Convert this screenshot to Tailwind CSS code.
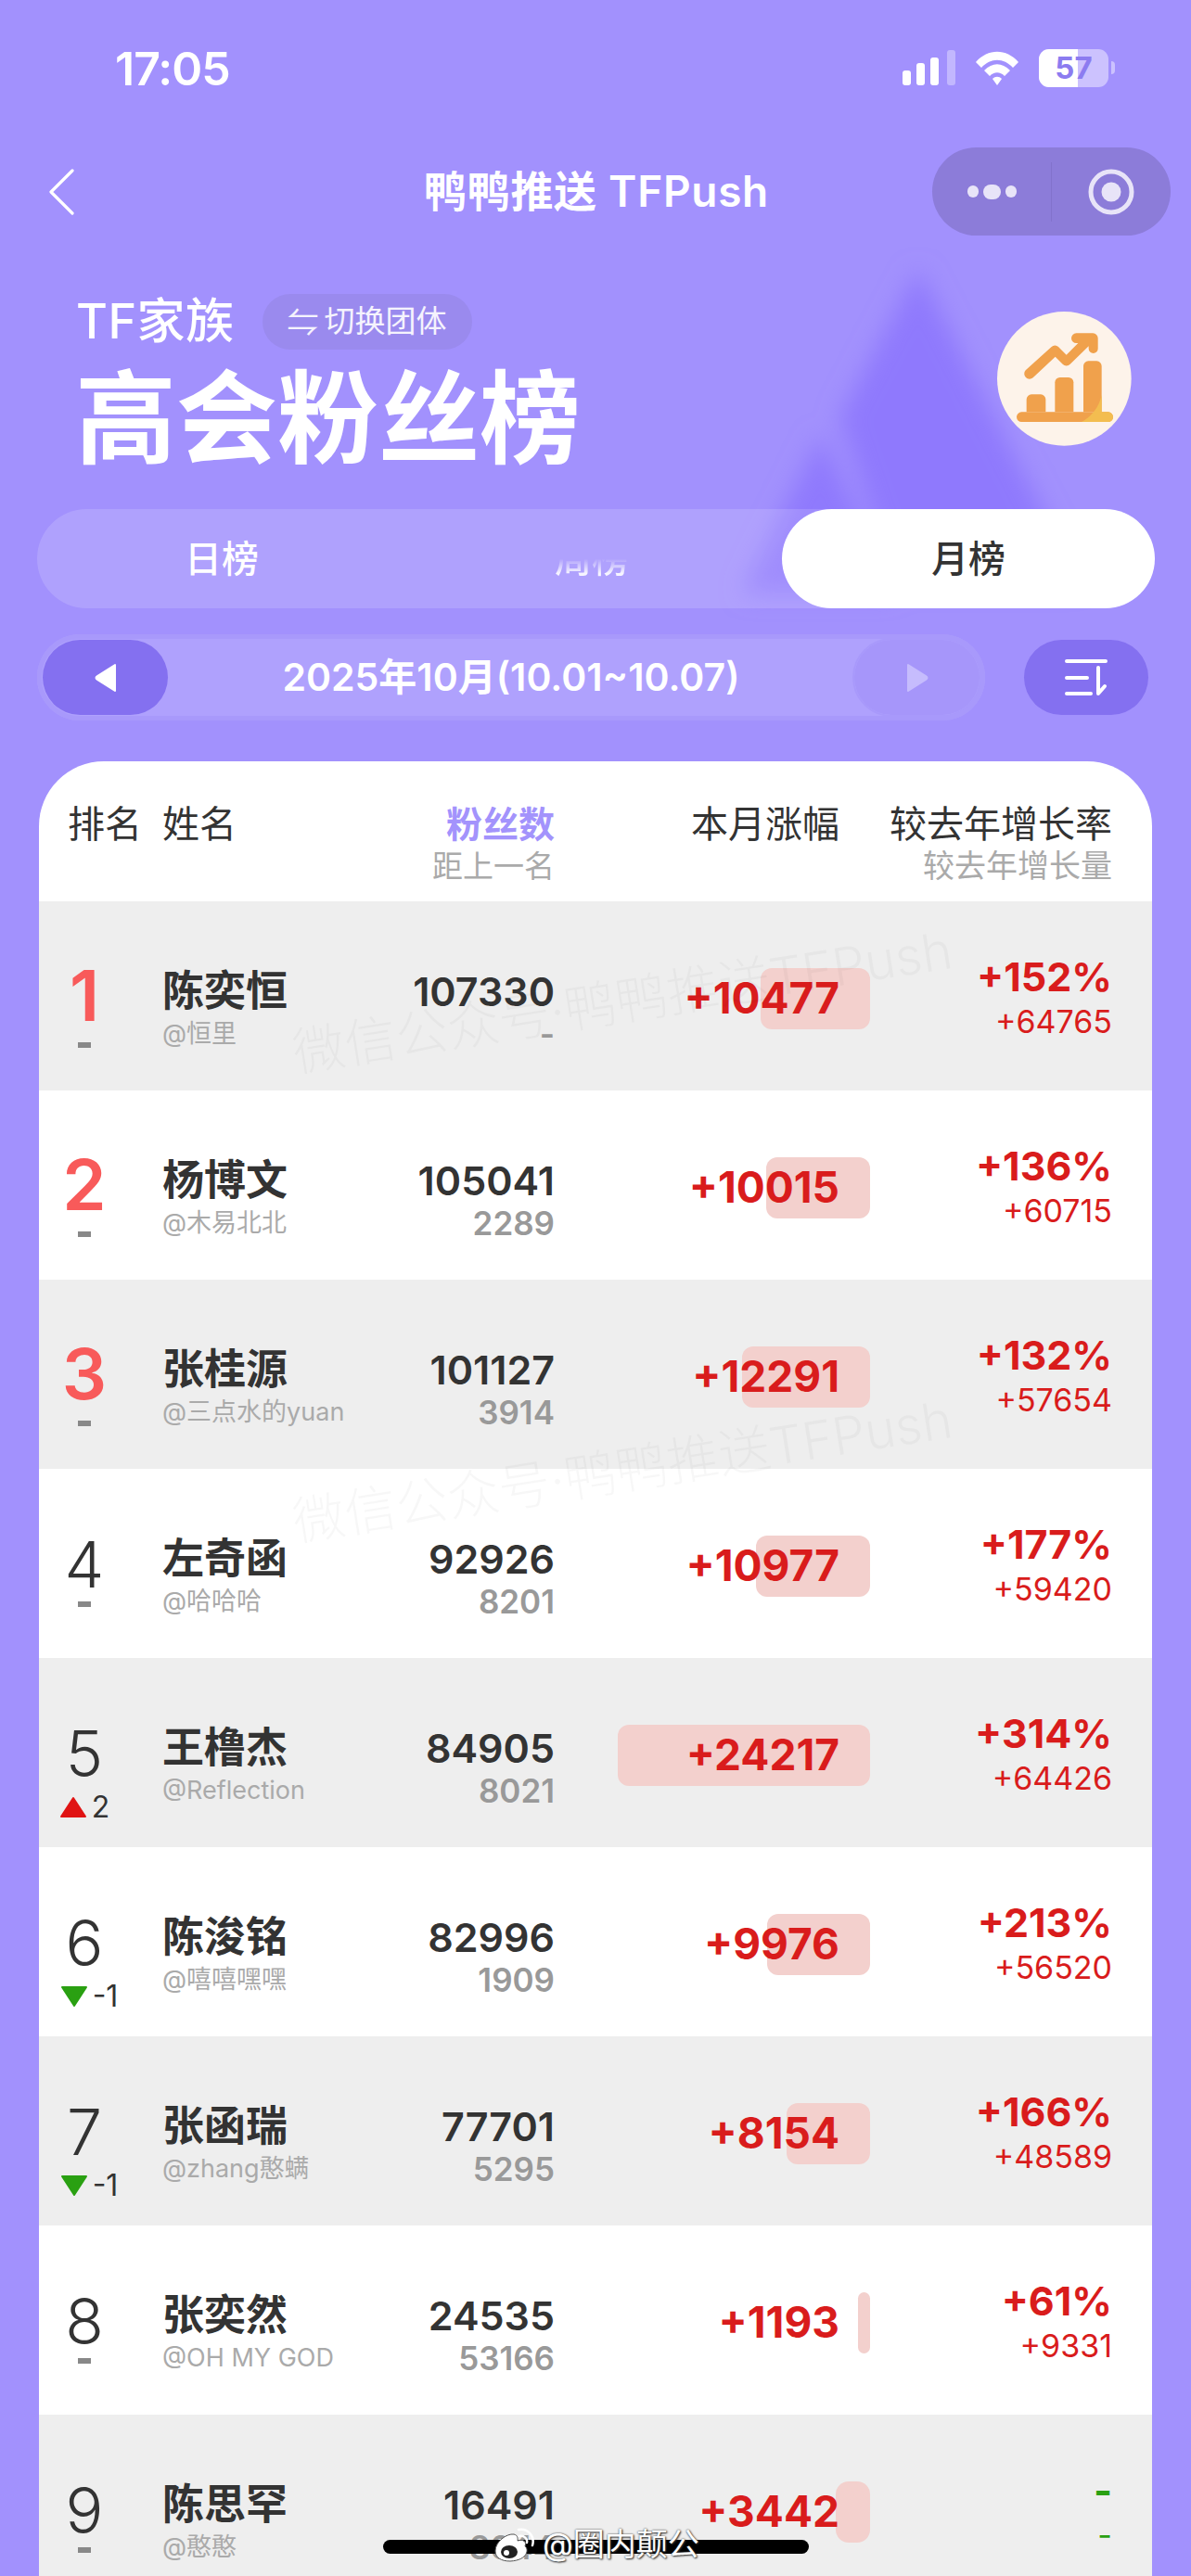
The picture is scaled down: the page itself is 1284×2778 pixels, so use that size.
<!DOCTYPE html>
<html lang="zh"><head><meta charset="utf-8"><script src="https://cdn.jsdelivr.net/npm/@tailwindcss/browser@4"></script><title>高会粉丝榜</title></head>
<body class="m-0">
<div class="relative w-[1284px] h-[2778px] overflow-hidden bg-[#a291fd] font-['Inter','Noto_Sans_CJK_SC',sans-serif] text-[#333]">
  <svg class="absolute left-0 top-0 pointer-events-none" width="1284" height="700" viewBox="0 0 1284 700"><defs><filter id="b" x="-30%" y="-30%" width="160%" height="160%"><feGaussianBlur stdDeviation="13"/></filter></defs><g filter="url(#b)" fill="#8f79fd"><path d="M990 290 L1165 630 L965 630 L905 450Z"/><path d="M885 468 L965 640 L800 640Z"/></g></svg>

  <div class="relative h-[159px]">
    <div class="flex justify-between pl-[124px] pr-[82px] pt-[45px]">
      <span class="text-[50px] leading-[58px] font-semibold text-white tracking-[-1px]">17:05</span>
      <div class="flex items-center gap-[20px] h-[52px] mt-[2px]">
        <svg width="57" height="38" viewBox="0 0 57 38"><rect x="0" y="22" width="9" height="16" rx="3" fill="#fff"/><rect x="15" y="14" width="9" height="24" rx="3" fill="#fff"/><rect x="30" y="8" width="9" height="30" rx="3" fill="#fff"/><rect x="48" y="0" width="9" height="38" rx="3" fill="#fff" fill-opacity=".35"/></svg>
        <svg width="50" height="38" viewBox="0 0 50 38"><path d="M2 13 C15 -2 35 -2 48 13 L42 19 C32 8 18 8 8 19Z" fill="#fff"/><path d="M11 22 C20 13 30 13 39 22 L33 28 C28 23 22 23 17 28Z" fill="#fff"/><path d="M20 31 C23 28 27 28 30 31 L25 38Z" fill="#fff"/></svg>
        <div class="relative flex items-center">
          <div class="relative w-[75px] h-[41px] rounded-[11px] bg-white/45 overflow-hidden"><div class="absolute left-0 top-0 bottom-0 w-[42px] bg-white"></div><span class="absolute inset-0 text-center text-[33px] leading-[41px] font-bold text-[#8c7cf0]">57</span></div>
          <div class="w-[4px] h-[14px] ml-[3px] rounded-r-full bg-white/45"></div>
        </div>
      </div>
    </div>
  </div>

  <div class="relative flex items-center h-[95px] pl-[52px] pr-[22px] justify-between">
    <svg width="28" height="50" viewBox="0 0 28 50" fill="none"><path d="M26 2 L3 25 L26 48" stroke="#fff" stroke-width="3.2" stroke-linecap="round" stroke-linejoin="round"/></svg>
    <div class="absolute left-[457px] top-0 h-[95px] flex items-center text-[46px] font-semibold text-white whitespace-nowrap tracking-[0.7px]">鸭鸭推送 TFPush</div>
    <div class="flex items-center w-[257px] h-[95px] rounded-full bg-[#8c7cd9]">
      <div class="flex items-center justify-center gap-[5px] w-[129px] h-[64px] border-r border-[#8272cc]">
        <span class="w-[12px] h-[13px] rounded-full bg-[#e8e4f8]"></span><span class="w-[19px] h-[16px] rounded-full bg-[#e8e4f8]"></span><span class="w-[12px] h-[13px] rounded-full bg-[#e8e4f8]"></span>
      </div>
      <div class="flex-1 flex justify-center">
        <svg width="52" height="52" viewBox="0 0 52 52"><circle cx="26" cy="26" r="22" fill="none" stroke="#e8e4f8" stroke-width="5"/><circle cx="26" cy="26" r="10.5" fill="#e8e4f8"/></svg>
      </div>
    </div>
  </div>

  <div class="relative flex justify-between pl-[82px] pr-[64px] pt-[63px] h-[295px]">
    <div>
      <div class="flex items-center gap-[30px] h-[60px]">
        <span class="text-[52px] leading-[60px] text-white font-medium whitespace-nowrap tracking-[0.5px]">TF家族</span>
        <div class="flex items-center gap-[6px] h-[60px] px-[27px] rounded-full bg-[#9a8aee] text-white/90 text-[33px] whitespace-nowrap"><span class="text-[34px]">⇋</span><span>切换团体</span></div>
      </div>
      <div class="ml-[-1px] mt-[16px] text-[109px] leading-[116px] font-bold text-white whitespace-nowrap">高会粉丝榜</div>
    </div>
    <svg class="mt-[19px] shrink-0" width="145" height="145" viewBox="105 80 435 435"><circle cx="322" cy="297" r="217" fill="#fdf3ea"/><g fill="#f0a14c"><path d="M200 405 V364 a16 16 0 0 1 16 -16 h30 a16 16 0 0 1 16 16 V405Z"/><path d="M292 405 V309 a16 16 0 0 1 16 -16 h28 a16 16 0 0 1 16 16 V405Z"/><path d="M384 405 V256 a16 16 0 0 1 16 -16 h27 a16 16 0 0 1 16 16 V405Z"/><rect x="168" y="405" width="312" height="32" rx="16"/><path d="M345 166 a16 16 0 0 1 16 -16 h54 a16 16 0 0 1 16 16 v34 a15 15 0 0 1 -30 0 v-8 l-60 58 a16 16 0 0 1 -24 0 l-24 -24 l-72 68 a17 17 0 0 1 -24 -24 l84 -76 a15 15 0 0 1 22 0 l26 26 l38 -38 h-6 a16 16 0 0 1 -16 -16Z"/></g><path d="M378 437 C410 420 435 390 443 350 V405 H464 a16 16 0 0 1 0 32Z" fill="#f3bd50"/></svg>
  </div>

  <div class="relative flex mx-[40px] h-[107px] rounded-full bg-white/15 text-[40px] font-medium text-white">
    <div class="w-[398px] flex items-center justify-center leading-none whitespace-nowrap">日榜</div>
    <div class="w-[400px] flex items-center justify-center leading-none whitespace-nowrap bg-clip-text text-transparent bg-linear-to-b from-transparent from-50% to-white/90 to-65%">周榜</div>
    <div class="ml-auto mr-[-1px] w-[402px] flex items-center justify-center rounded-full bg-white text-[#333]">月榜</div>
  </div>

  <div class="relative flex items-center justify-between ml-[40px] mr-[46px] mt-[28px]">
    <div class="flex items-center justify-between w-[1022px] h-[93px] p-[6px] rounded-full bg-white/15 outline-[5px] outline-offset-[-5px] outline-[#a899fb]">
      <div class="flex items-center justify-center w-[135px] h-[81px] rounded-full bg-[#8470f0]">
        <svg width="24" height="32" viewBox="0 0 24 32"><path d="M22 2 V30 L3 18 Q0 16 3 14Z" fill="#fff" stroke="#fff" stroke-width="2" stroke-linejoin="round"/></svg>
      </div>
      <span class="text-[41px] font-semibold text-white whitespace-nowrap">2025年10月(10.01~10.07)</span>
      <div class="flex items-center justify-center w-[135px] h-[81px] rounded-full bg-[#a696fa] outline-2 outline-[#a899fb]">
        <svg width="24" height="32" viewBox="0 0 24 32"><path d="M2 2 V30 L21 18 Q24 16 21 14Z" fill="#c6bcfd" stroke="#c6bcfd" stroke-width="2" stroke-linejoin="round"/></svg>
      </div>
    </div>
    <div class="flex items-center justify-center w-[134px] h-[81px] rounded-full bg-[#8470f0]">
      <svg width="46" height="42" viewBox="0 0 46 42" fill="none"><path d="M2 3 H44 M2 21 H24 M2 38 H28 M36 10 V38 L43 30" stroke="#fff" stroke-width="4" stroke-linecap="round" stroke-linejoin="round"/></svg>
    </div>
  </div>

  <div class="relative mx-[42px] mt-[44px] rounded-t-[70px] bg-white">
    <div class="flex h-[151px] text-[#333] text-[40px] leading-[46px] pt-[45px] whitespace-nowrap">
      <div class="w-[31px]"></div>
      <div class="w-[102px]">排名</div>
      <div class="w-[250px]">姓名</div>
      <div class="w-[173px] text-right"><div class="text-[39px] font-bold text-[#a393fc]">粉丝数</div><div class="text-[33px] leading-[44px] text-[#aaa]">距上一名</div></div>
      <div class="w-[307px] text-right">本月涨幅</div>
      <div class="w-[294px] text-right"><div>较去年增长率</div><div class="text-[34px] leading-[44px] text-[#aaa]">较去年增长量</div></div>
    </div>

    <!-- 1 -->
    <div class="flex h-[204px] bg-[#eeeeee] whitespace-nowrap">
      <div class="w-[98px] pt-[61px] flex flex-col items-center shrink-0"><div class="h-[80px] text-[76px] leading-[80px] font-semibold text-[#f85a5a]">1</div><div class="mt-[-4px] h-[36px] flex items-center"><span class="w-[14px] h-[6px] bg-[#888]"></span></div></div>
      <div class="ml-[35px] w-[250px] pt-[69px] shrink-0"><div class="text-[45px] leading-[56px] font-semibold">陈奕恒</div><div class="text-[27px] leading-[36px] text-[#aaa]">@恒里</div></div>
      <div class="w-[173px] pt-[69px] text-right shrink-0"><div class="text-[43px] leading-[56px] font-semibold">107330</div><div class="text-[35px] leading-[36px] font-semibold text-[#999]">-</div></div>
      <div class="relative w-[340px] shrink-0 mt-[72px] h-[66px] text-right pr-[33px]"><div class="absolute right-0 top-0 h-[66px] rounded-[12px] bg-[#f3d0cd]" style="width:118px"></div><span class="relative text-[46px] leading-[64px] font-bold text-[#d91c1c]">+10477</span></div>
      <div class="w-[261px] pt-[57px] text-right shrink-0 text-[#d91c1c]"><div class="text-[43px] leading-[48px] font-bold">+152%</div><div class="text-[34px] leading-[50px]">+64765</div></div>
    </div>
    <!-- 2 -->
    <div class="flex h-[204px] bg-white whitespace-nowrap">
      <div class="w-[98px] pt-[61px] flex flex-col items-center shrink-0"><div class="h-[80px] text-[76px] leading-[80px] font-semibold text-[#f85a5a]">2</div><div class="mt-[-4px] h-[36px] flex items-center"><span class="w-[14px] h-[6px] bg-[#888]"></span></div></div>
      <div class="ml-[35px] w-[250px] pt-[69px] shrink-0"><div class="text-[45px] leading-[56px] font-semibold">杨博文</div><div class="text-[27px] leading-[36px] text-[#aaa]">@木易北北</div></div>
      <div class="w-[173px] pt-[69px] text-right shrink-0"><div class="text-[43px] leading-[56px] font-semibold">105041</div><div class="text-[35px] leading-[36px] font-semibold text-[#999]">2289</div></div>
      <div class="relative w-[340px] shrink-0 mt-[72px] h-[66px] text-right pr-[33px]"><div class="absolute right-0 top-0 h-[66px] rounded-[12px] bg-[#f3d0cd]" style="width:112px"></div><span class="relative text-[46px] leading-[64px] font-bold text-[#d91c1c]">+10015</span></div>
      <div class="w-[261px] pt-[57px] text-right shrink-0 text-[#d91c1c]"><div class="text-[43px] leading-[48px] font-bold">+136%</div><div class="text-[34px] leading-[50px]">+60715</div></div>
    </div>
    <!-- 3 -->
    <div class="flex h-[204px] bg-[#eeeeee] whitespace-nowrap">
      <div class="w-[98px] pt-[61px] flex flex-col items-center shrink-0"><div class="h-[80px] text-[76px] leading-[80px] font-semibold text-[#f85a5a]">3</div><div class="mt-[-4px] h-[36px] flex items-center"><span class="w-[14px] h-[6px] bg-[#888]"></span></div></div>
      <div class="ml-[35px] w-[250px] pt-[69px] shrink-0"><div class="text-[45px] leading-[56px] font-semibold">张桂源</div><div class="text-[27px] leading-[36px] text-[#aaa]">@三点水的yuan</div></div>
      <div class="w-[173px] pt-[69px] text-right shrink-0"><div class="text-[43px] leading-[56px] font-semibold">101127</div><div class="text-[35px] leading-[36px] font-semibold text-[#999]">3914</div></div>
      <div class="relative w-[340px] shrink-0 mt-[72px] h-[66px] text-right pr-[33px]"><div class="absolute right-0 top-0 h-[66px] rounded-[12px] bg-[#f3d0cd]" style="width:138px"></div><span class="relative text-[46px] leading-[64px] font-bold text-[#d91c1c]">+12291</span></div>
      <div class="w-[261px] pt-[57px] text-right shrink-0 text-[#d91c1c]"><div class="text-[43px] leading-[48px] font-bold">+132%</div><div class="text-[34px] leading-[50px]">+57654</div></div>
    </div>
    <!-- 4 -->
    <div class="flex h-[204px] bg-white whitespace-nowrap">
      <div class="w-[98px] pt-[63px] flex flex-col items-center shrink-0"><div class="h-[80px] text-[68px] leading-[80px] font-light">4</div><div class="mt-[-15px] h-[36px] flex items-center"><span class="w-[14px] h-[6px] bg-[#888]"></span></div></div>
      <div class="ml-[35px] w-[250px] pt-[69px] shrink-0"><div class="text-[45px] leading-[56px] font-semibold">左奇函</div><div class="text-[27px] leading-[36px] text-[#aaa]">@哈哈哈</div></div>
      <div class="w-[173px] pt-[69px] text-right shrink-0"><div class="text-[43px] leading-[56px] font-semibold">92926</div><div class="text-[35px] leading-[36px] font-semibold text-[#999]">8201</div></div>
      <div class="relative w-[340px] shrink-0 mt-[72px] h-[66px] text-right pr-[33px]"><div class="absolute right-0 top-0 h-[66px] rounded-[12px] bg-[#f3d0cd]" style="width:123px"></div><span class="relative text-[46px] leading-[64px] font-bold text-[#d91c1c]">+10977</span></div>
      <div class="w-[261px] pt-[57px] text-right shrink-0 text-[#d91c1c]"><div class="text-[43px] leading-[48px] font-bold">+177%</div><div class="text-[34px] leading-[50px]">+59420</div></div>
    </div>
    <!-- 5 -->
    <div class="flex h-[204px] bg-[#eeeeee] whitespace-nowrap">
      <div class="w-[98px] pt-[63px] flex flex-col items-center shrink-0"><div class="h-[80px] text-[68px] leading-[80px] font-light">5</div><div class="h-[36px] flex items-center gap-[5px] text-[32px]"><svg width="30" height="24" viewBox="0 0 30 24"><path d="M15 2 L28 22 H2Z" fill="#e01414" stroke="#e01414" stroke-width="2" stroke-linejoin="round"/></svg><span>2</span></div></div>
      <div class="ml-[35px] w-[250px] pt-[69px] shrink-0"><div class="text-[45px] leading-[56px] font-semibold">王橹杰</div><div class="text-[27px] leading-[36px] text-[#aaa]">@Reflection</div></div>
      <div class="w-[173px] pt-[69px] text-right shrink-0"><div class="text-[43px] leading-[56px] font-semibold">84905</div><div class="text-[35px] leading-[36px] font-semibold text-[#999]">8021</div></div>
      <div class="relative w-[340px] shrink-0 mt-[72px] h-[66px] text-right pr-[33px]"><div class="absolute right-0 top-0 h-[66px] rounded-[12px] bg-[#f3d0cd]" style="width:272px"></div><span class="relative text-[46px] leading-[64px] font-bold text-[#d91c1c]">+24217</span></div>
      <div class="w-[261px] pt-[57px] text-right shrink-0 text-[#d91c1c]"><div class="text-[43px] leading-[48px] font-bold">+314%</div><div class="text-[34px] leading-[50px]">+64426</div></div>
    </div>
    <!-- 6 -->
    <div class="flex h-[204px] bg-white whitespace-nowrap">
      <div class="w-[98px] pt-[63px] flex flex-col items-center shrink-0"><div class="h-[80px] text-[68px] leading-[80px] font-light">6</div><div class="h-[36px] pl-[10px] flex items-center gap-[5px] text-[32px]"><svg width="30" height="24" viewBox="0 0 30 24"><path d="M15 22 L28 2 H2Z" fill="#2aa012" stroke="#2aa012" stroke-width="2" stroke-linejoin="round"/></svg><span>-1</span></div></div>
      <div class="ml-[35px] w-[250px] pt-[69px] shrink-0"><div class="text-[45px] leading-[56px] font-semibold">陈浚铭</div><div class="text-[27px] leading-[36px] text-[#aaa]">@嘻嘻嘿嘿</div></div>
      <div class="w-[173px] pt-[69px] text-right shrink-0"><div class="text-[43px] leading-[56px] font-semibold">82996</div><div class="text-[35px] leading-[36px] font-semibold text-[#999]">1909</div></div>
      <div class="relative w-[340px] shrink-0 mt-[72px] h-[66px] text-right pr-[33px]"><div class="absolute right-0 top-0 h-[66px] rounded-[12px] bg-[#f3d0cd]" style="width:111px"></div><span class="relative text-[46px] leading-[64px] font-bold text-[#d91c1c]">+9976</span></div>
      <div class="w-[261px] pt-[57px] text-right shrink-0 text-[#d91c1c]"><div class="text-[43px] leading-[48px] font-bold">+213%</div><div class="text-[34px] leading-[50px]">+56520</div></div>
    </div>
    <!-- 7 -->
    <div class="flex h-[204px] bg-[#eeeeee] whitespace-nowrap">
      <div class="w-[98px] pt-[63px] flex flex-col items-center shrink-0"><div class="h-[80px] text-[68px] leading-[80px] font-light">7</div><div class="h-[36px] pl-[10px] flex items-center gap-[5px] text-[32px]"><svg width="30" height="24" viewBox="0 0 30 24"><path d="M15 22 L28 2 H2Z" fill="#2aa012" stroke="#2aa012" stroke-width="2" stroke-linejoin="round"/></svg><span>-1</span></div></div>
      <div class="ml-[35px] w-[250px] pt-[69px] shrink-0"><div class="text-[45px] leading-[56px] font-semibold">张函瑞</div><div class="text-[27px] leading-[36px] text-[#aaa]">@zhang憨螨</div></div>
      <div class="w-[173px] pt-[69px] text-right shrink-0"><div class="text-[43px] leading-[56px] font-semibold">77701</div><div class="text-[35px] leading-[36px] font-semibold text-[#999]">5295</div></div>
      <div class="relative w-[340px] shrink-0 mt-[72px] h-[66px] text-right pr-[33px]"><div class="absolute right-0 top-0 h-[66px] rounded-[12px] bg-[#f3d0cd]" style="width:90px"></div><span class="relative text-[46px] leading-[64px] font-bold text-[#d91c1c]">+8154</span></div>
      <div class="w-[261px] pt-[57px] text-right shrink-0 text-[#d91c1c]"><div class="text-[43px] leading-[48px] font-bold">+166%</div><div class="text-[34px] leading-[50px]">+48589</div></div>
    </div>
    <!-- 8 -->
    <div class="flex h-[204px] bg-white whitespace-nowrap">
      <div class="w-[98px] pt-[63px] flex flex-col items-center shrink-0"><div class="h-[80px] text-[68px] leading-[80px] font-light">8</div><div class="mt-[-15px] h-[36px] flex items-center"><span class="w-[14px] h-[6px] bg-[#888]"></span></div></div>
      <div class="ml-[35px] w-[250px] pt-[69px] shrink-0"><div class="text-[45px] leading-[56px] font-semibold">张奕然</div><div class="text-[27px] leading-[36px] text-[#aaa]">@OH MY GOD</div></div>
      <div class="w-[173px] pt-[69px] text-right shrink-0"><div class="text-[43px] leading-[56px] font-semibold">24535</div><div class="text-[35px] leading-[36px] font-semibold text-[#999]">53166</div></div>
      <div class="relative w-[340px] shrink-0 mt-[72px] h-[66px] text-right pr-[33px]"><div class="absolute right-0 top-0 h-[66px] rounded-[8px] bg-[#f3d0cd]" style="width:13px"></div><span class="relative text-[46px] leading-[64px] font-bold text-[#d91c1c]">+1193</span></div>
      <div class="w-[261px] pt-[57px] text-right shrink-0 text-[#d91c1c]"><div class="text-[43px] leading-[48px] font-bold">+61%</div><div class="text-[34px] leading-[50px]">+9331</div></div>
    </div>
    <!-- 9 -->
    <div class="flex h-[204px] bg-[#eeeeee] whitespace-nowrap">
      <div class="w-[98px] pt-[63px] flex flex-col items-center shrink-0"><div class="h-[80px] text-[68px] leading-[80px] font-light">9</div><div class="mt-[-15px] h-[36px] flex items-center"><span class="w-[14px] h-[6px] bg-[#888]"></span></div></div>
      <div class="ml-[35px] w-[250px] pt-[69px] shrink-0"><div class="text-[45px] leading-[56px] font-semibold">陈思罕</div><div class="text-[27px] leading-[36px] text-[#aaa]">@憨憨</div></div>
      <div class="w-[173px] pt-[69px] text-right shrink-0"><div class="text-[43px] leading-[56px] font-semibold">16491</div><div class="text-[35px] leading-[36px] font-semibold text-[#999]">8044</div></div>
      <div class="relative w-[340px] shrink-0 mt-[72px] h-[66px] text-right pr-[33px]"><div class="absolute right-0 top-0 h-[66px] rounded-[14px] bg-[#f3d0cd]" style="width:37px"></div><span class="relative text-[46px] leading-[64px] font-bold text-[#d91c1c]">+3442</span></div>
      <div class="w-[261px] pt-[57px] text-right shrink-0 text-[#2aa012]"><div class="text-[43px] leading-[48px] font-bold">-</div><div class="text-[34px] leading-[50px]">-</div></div>
    </div>

    <!-- watermarks -->
    <div class="absolute left-[270px] top-[216px] w-[730px] -rotate-[9deg] text-[56px] font-light text-black/[0.03] whitespace-nowrap pointer-events-none">微信公众号·鸭鸭推送TFPush</div>
    <div class="absolute left-[270px] top-[722px] w-[730px] -rotate-[9deg] text-[56px] font-light text-black/[0.03] whitespace-nowrap pointer-events-none">微信公众号·鸭鸭推送TFPush</div>
  </div>

  <!-- home indicator and weibo mark -->
  <div class="absolute left-[413px] top-[2739px] w-[459px] h-[15px] rounded-full bg-black"></div>
  <div class="absolute left-[532px] top-[2725px] flex items-center gap-[8px] h-[38px]">
    <svg width="45" height="38" viewBox="0 0 45 38" fill="none"><path d="M2 26 C2 16 14 7 22 8 C27 9 26 14 26 15 C32 13 36 16 34 21 C38 23 38 36 18 37 C8 37 2 33 2 26Z" fill="#fff" stroke="#555" stroke-width="1"/><ellipse cx="17" cy="27" rx="9" ry="7" fill="#222"/><circle cx="14" cy="28" r="3" fill="#fff"/><path d="M27 3 C37 1 45 10 42 20 M28 10 C33 9 37 13 36 17" stroke="#fff" stroke-width="2.5" stroke-linecap="round"/></svg>
    <span class="text-[34px] leading-[38px] text-white whitespace-nowrap [text-shadow:0_0_2px_#333,1px_1px_2px_#333]">@圈内颠公</span>
  </div>
</div>
</body></html>
